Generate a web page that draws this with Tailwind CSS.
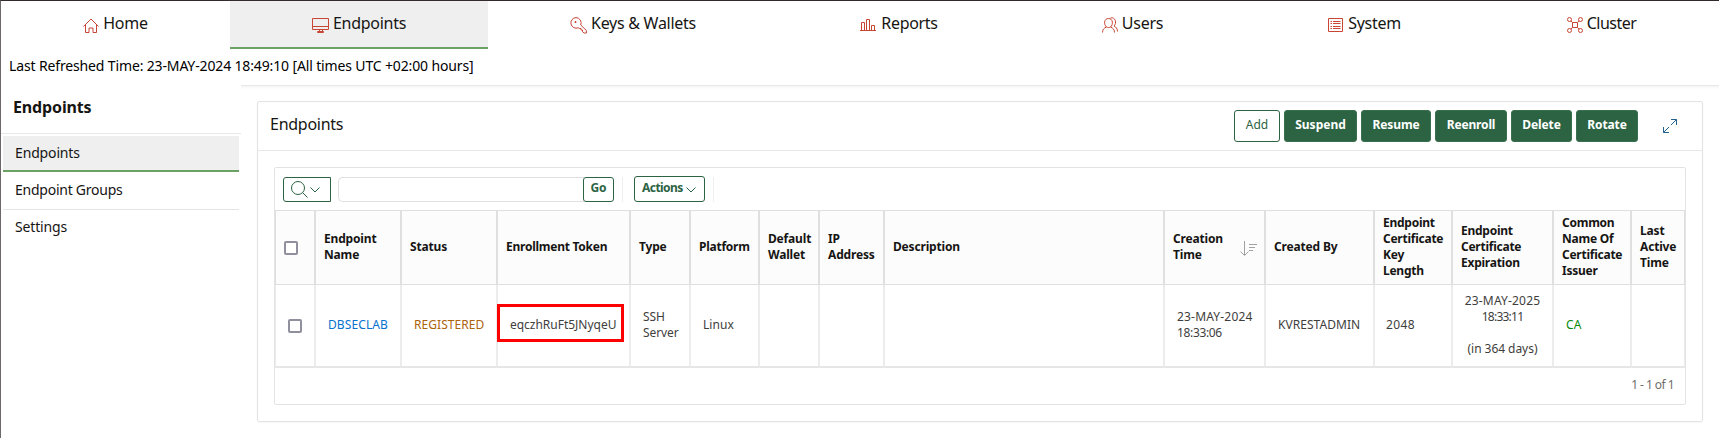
<!DOCTYPE html>
<html lang="en">
<head>
<meta charset="utf-8">
<title>Endpoints</title>
<script src="https://cdn.jsdelivr.net/npm/@tailwindcss/browser@4"></script>
</head>
<body class="bg-white">
<div class="flex h-[438px] w-[1719px] flex-col overflow-hidden border-t border-l border-t-[#312c2b] border-l-[#6b6867] bg-white font-['Noto_Sans',sans-serif] text-[#161513]">

  <!-- Main navigation -->
  <nav class="grid h-12 shrink-0 grid-cols-[229px_258px_290px_241px_226px_239px_235px] text-base tracking-[-0.27px] whitespace-nowrap">
    <a class="flex items-start justify-center gap-1 pt-[10px] leading-6">
      <svg class="mt-[7px] size-4" viewBox="0 0 16 16" fill="none" stroke="#c74634"><path d="M.5 8.5 8 1l7.5 7.500M2.500 7v7.500h3.500v-4.500h4v4.500h3.500V7"/></svg>
      <span>Home</span>
    </a>
    <a class="flex items-start justify-center gap-1 border-b-2 border-[#6aa264] bg-[#efefef] pt-[10px] leading-6">
      <svg class="mt-[7px] h-4 w-[17px]" viewBox="0 0 17 16" fill="none" stroke="#c74634"><path d="M.5.5h16v11H.5zM.5 8.500h16M7.500 11.500v2M10.500 11.500v2M5.500 13.500h6v1h-6z"/></svg>
      <span>Endpoints</span>
    </a>
    <a class="flex items-start justify-center gap-1 pt-[10px] leading-6">
      <svg class="mt-[6px] h-[17px] w-[17px]" viewBox="0 0 17 17" fill="none" stroke="#c74634"><path d="M6 .6a5.300 5.300 0 1 0 2.200 10.200l1.300.7h1.500v1.500h1.500v1.700l1.700 1.300h2.200v-2.500l-5.700-5.500A5.300 5.300 0 0 0 6 .6z"/><path d="M5 4.500h1v1H5z"/></svg>
      <span>Keys &amp; Wallets</span>
    </a>
    <a class="flex items-start justify-center gap-[5px] pt-[10px] pl-px leading-6">
      <svg class="mt-[7px] size-4" viewBox="0 0 16 16" fill="none" stroke="#c74634"><path d="M0 12.500h16M1.500 12V4.500h3V12M6.500 12V1.500h3V12M11.500 12V7.500h3V12"/></svg>
      <span class="tracking-[-0.32px]">Reports</span>
    </a>
    <a class="flex items-start justify-center gap-1 pt-[10px] pl-px leading-6">
      <svg class="mt-[6px] size-4" viewBox="0 0 16 16" fill="none" stroke="#c74634"><path d="M.5 15.500c0-3 1.500-4.500 4-5.500C1.500 7.500 2 1.500 6.500 1.500S11.500 7.500 8.500 10c2.500 1 4 2.500 4 5.500M4.500 10c1.300.7 2.700.7 4 0M8.500 1C13.500-.5 15 6.500 12 9c2 1 3.500 2.500 3.500 5.500"/></svg>
      <span>Users</span>
    </a>
    <a class="flex items-start justify-center gap-[5px] pt-[10px] leading-6">
      <svg class="mt-[7px] h-[14px] w-[15px]" viewBox="0 0 15 14" fill="none" stroke="#c74634"><path d="M.5.500h14v13H.5zM2.500 3.500h1.500M5 3.500h7.500M2.500 5.500h1.500M5 5.500h7.500M2.500 8.500h1.500M5 8.500h7.500M2.500 10.500h1.500M5 10.500h7.500"/></svg>
      <span>System</span>
    </a>
    <a class="flex items-start justify-center gap-1 pt-[10px] leading-6 tracking-[-0.5px]">
      <svg class="mt-[6px] size-4" viewBox="0 0 16 16" fill="none" stroke="#c74634"><circle cx="2.500" cy="2.500" r="2"/><circle cx="13.500" cy="2.500" r="2"/><circle cx="2.500" cy="13.500" r="2"/><circle cx="13.500" cy="13.500" r="2"/><path d="M5.500 5.500h5v5h-5zM4 4l1.500 1.500M12 4l-1.500 1.500M4 12l1.500-1.500M12 12l-1.500-1.500"/></svg>
      <span>Cluster</span>
    </a>
  </nav>

  <div class="h-9 shrink-0 pt-[5px] pl-2 text-sm leading-6 tracking-[-0.14px] whitespace-nowrap text-black">Last Refreshed Time: 23-MAY-2024 18:49:10 [All times UTC +02:00 hours]</div>

  <div class="flex min-h-0 flex-1">
    <!-- Side menu -->
    <aside class="w-[240px] shrink-0">
      <h2 class="h-[49px] border-b border-[#e8e8e8] pt-[10px] pl-3 text-base leading-6 font-bold tracking-[-0.14px]">Endpoints</h2>
      <ul class="px-[2px] pt-[2px] text-sm tracking-[-0.15px]">
        <li class="h-9 border-b-2 border-[#6aa264] bg-[#efefef] pl-3 leading-[34px]">Endpoints</li>
        <li class="h-[38px] border-b border-[#e4e4e4] pl-3 leading-[36px] tracking-[-0.25px]">Endpoint Groups</li>
        <li class="pl-3 leading-[34px]">Settings</li>
      </ul>
    </aside>

    <main class="min-w-0 flex-1">
      <div class="h-1 border-t border-[#e9e9e9] bg-linear-to-b from-[#f3f3f3] to-white"></div>
      <section class="mt-3 ml-4 h-[321px] w-[1446px] rounded-[2px] border border-[#e3e3e3] shadow-[0_1px_2px_#0000000a]">
        <header class="flex h-[49px] border-b border-[#e8e8e8] pr-[25px] pl-3">
          <h1 class="mt-[10px] flex-1 text-base leading-6 tracking-[-0.27px]">Endpoints</h1>
          <div class="mt-2 flex h-8 gap-1 text-xs font-bold tracking-[-0.1px] text-white [&>button]:rounded-[3px] [&>button]:border [&>button]:pb-[2px] [&>button]:leading-[28px]">
            <button class="w-[46px] border-[#2c6343] font-normal tracking-normal text-[#2c6343]">Add</button>
            <button class="w-[73px] border-[#3a704f] bg-[#2c6343] tracking-normal">Suspend</button>
            <button class="w-[70px] border-[#3a704f] bg-[#2c6343]">Resume</button>
            <button class="w-[72px] border-[#3a704f] bg-[#2c6343] tracking-[-0.15px]">Reenroll</button>
            <button class="w-[61px] border-[#3a704f] bg-[#2c6343]">Delete</button>
            <button class="w-[62px] border-[#3a704f] bg-[#2c6343]">Rotate</button>
          </div>
          <svg class="mt-[17px] ml-[25px] h-[14px] w-[14px]" viewBox="0 0 14 14" fill="none" stroke="#22628f"><path d="M8 .5h5.500V6M13.500.5 8 6M.5 8v5.500H6M.5 13.500 6 8"/></svg>
        </header>

        <div class="mt-4 ml-4 h-[238px] w-[1412px] rounded-[2px] border border-[#e3e3e3]">
          <!-- Search toolbar -->
          <div class="flex h-[42px] pt-[9px] pl-2 text-xs font-bold text-[#2c6343]">
            <div class="flex h-[25px] w-12 rounded-l-[3px] border border-[#2c6343]">
              <svg class="mt-[3px] ml-[7px] h-[17px] w-[17px]" viewBox="0 0 17 17" fill="none" stroke="currentColor"><circle cx="7" cy="7" r="6.500"/><path d="m11.500 11.500 5 5"/></svg>
              <svg class="mt-[9px] ml-[2px] h-[6px] w-[10px]" viewBox="0 0 10 6" fill="none" stroke="currentColor"><path d="m.5.500 4.500 4.500L9.500.5"/></svg>
            </div>
            <div class="ml-[7px] h-[25px] w-[246px] rounded-l-[5px] border border-r-0 border-[#dfdfdf]"></div>
            <button class="-ml-px h-[25px] w-[31px] rounded-[3px] border border-[#2c6343] pb-1 leading-[19px] tracking-[-0.1px]">Go</button>
            <div class="ml-2 h-[25px] w-px bg-[#efefef]"></div>
            <button class="-mt-px ml-[11px] flex h-[26px] w-[71px] rounded-[3px] border border-[#2c6343] pl-[7px] leading-[22px] tracking-[-0.55px]">Actions
              <svg class="mt-[10px] ml-[3px] h-[6px] w-[10px]" viewBox="0 0 10 6" fill="none" stroke="currentColor"><path d="m.5.500 4.500 4.500L9.500.5"/></svg>
            </button>
            <div class="ml-2 h-[25px] w-px bg-[#efefef]"></div>
          </div>

          <!-- Report table -->
          <table class="w-[1410px] table-fixed border-separate border-spacing-0 text-left text-xs leading-4">
            <colgroup><col class="w-[41px]"><col class="w-[86px]"><col class="w-[96px]"><col class="w-[133px]"><col class="w-[60px]"><col class="w-[69px]"><col class="w-[60px]"><col class="w-[65px]"><col class="w-[280px]"><col class="w-[101px]"><col class="w-[109px]"><col class="w-[78px]"><col class="w-[101px]"><col class="w-[78px]"><col class="w-[53px]"></colgroup>
            <thead>
              <tr class="h-[75px] bg-[#fcfcfc] tracking-[-0.17px] [&>th]:border-y [&>th]:border-r-2 [&>th]:border-[#dfdfdf] [&>th]:p-0 [&>th]:pb-[2px] [&>th]:pl-2 [&>th]:align-middle [&>th:last-child]:border-r">
                <th class="border-l"><span class="mt-[2px] block size-[14px] rounded-[2px] border-2 border-[#8f8f9d] bg-white"></span></th>
                <th>Endpoint<br>Name</th>
                <th>Status</th>
                <th class="tracking-[-0.25px]">Enrollment Token</th>
                <th>Type</th>
                <th class="tracking-[-0.25px]">Platform</th>
                <th>Default<br>Wallet</th>
                <th>IP<br>Address</th>
                <th>Description</th>
                <th><div class="flex items-center justify-between pr-[7px]"><span>Creation<br>Time</span><svg class="mt-1 h-[15px] w-[17px]" viewBox="0 0 17 15" fill="none" stroke="#a3a1a0"><path d="M4.500 0v14M.5 10.500l4 4 4-4M9 3.500h8M9 6.500h6M9 9.500h4"/></svg></div></th>
                <th>Created By</th>
                <th class="tracking-[-0.25px]">Endpoint<br>Certificate<br>Key<br>Length</th>
                <th class="tracking-[-0.25px]">Endpoint<br>Certificate<br>Expiration</th>
                <th class="tracking-[-0.25px]">Common<br>Name Of<br>Certificate<br>Issuer</th>
                <th>Last<br>Active<br>Time</th>
              </tr>
            </thead>
            <tbody>
              <tr class="h-[83px] tracking-[0.05px] text-[#403e3c] [&>td]:border-r-2 [&>td]:border-b-2 [&>td]:border-r-[#ececec] [&>td]:border-b-[#e6e6e6] [&>td]:p-0 [&>td]:pb-[2px] [&>td]:pl-3 [&>td]:align-middle [&>td:last-child]:border-r">
                <td class="border-l border-l-[#ececec]"><span class="mt-[2px] block size-[14px] rounded-[2px] border-2 border-[#8f8f9d] bg-white"></span></td>
                <td class="tracking-[0.1px] text-[#0572ce]">DBSECLAB</td>
                <td class="text-[#ac630c]">REGISTERED</td>
                <td class="relative tracking-[-0.02px]">eqczhRuFt5JNyqeU<span class="absolute top-[19px] -left-px h-[38px] w-[127px] border-3 border-[#ff0000]"></span></td>
                <td class="tracking-[-0.1px]">SSH<br>Server</td>
                <td>Linux</td>
                <td></td>
                <td></td>
                <td></td>
                <td><span class="tracking-[0.18px]">23-MAY-2024</span><br><span class="tracking-[-0.35px]">18:33:06</span></td>
                <td>KVRESTADMIN</td>
                <td><span class="-ml-px tracking-[0.4px]">2048</span></td>
                <td><div class="-ml-3 text-center"><span class="tracking-[0.18px]">23-MAY-2025</span><br><span class="tracking-[-0.75px]">18:33:11</span><br><br><span class="tracking-[-0.05px]">(in 364 days)</span></div></td>
                <td class="text-[#0a8a0a]">CA</td>
                <td></td>
              </tr>
            </tbody>
          </table>
          <div class="pt-[7px] pr-[11px] text-right text-xs leading-5 tracking-[-0.55px] text-[#6f6d6b]">1 - 1 of 1</div>
        </div>
      </section>
    </main>
  </div>
</div>
</body>
</html>
